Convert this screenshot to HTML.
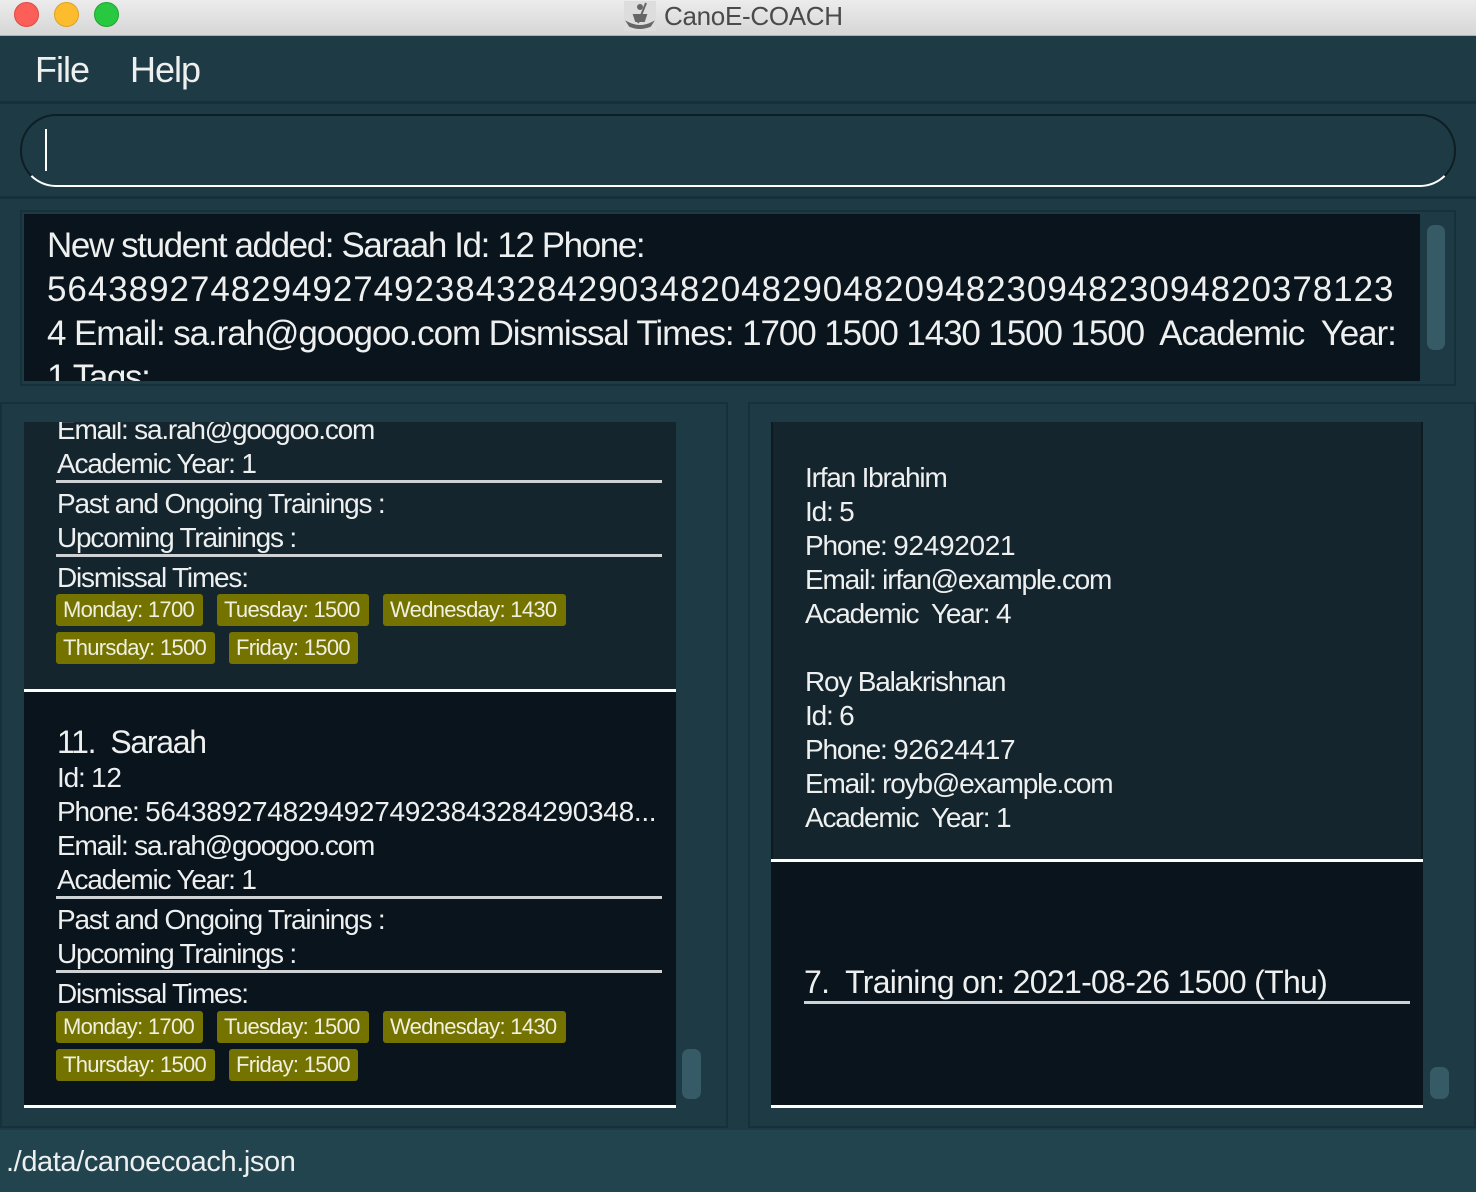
<!DOCTYPE html>
<html><head><meta charset="utf-8"><style>
*{margin:0;padding:0;box-sizing:border-box}
body{width:1476px;height:1192px;overflow:hidden;background:#1d3a45;font-family:"Liberation Sans",sans-serif;color:#eef0f0;position:relative}
.a{position:absolute}
.t{position:absolute;white-space:nowrap;line-height:1}
.c{font-size:28px;letter-spacing:-1.2px}
.d{letter-spacing:-0.3px}
.tag{position:absolute;height:32px;background:#747300;border-radius:3px;font-size:22px;letter-spacing:-0.7px;line-height:32px;padding-left:7px;white-space:nowrap;color:#f0f0e0}
.ln{position:absolute;height:3px;background:#cfd2d4}
.wl{position:absolute;height:3px;background:#fff}
</style></head><body>
<div class="a" style="left:0;top:0;width:1476px;height:36px;background:linear-gradient(#ececec,#d6d6d6);border-bottom:1px solid #b0b0b0"></div>
<div class="a" style="left:14px;top:2px;width:25px;height:25px;border-radius:50%;background:#fc5f57;border:1px solid #de4a42"></div>
<div class="a" style="left:54px;top:2px;width:25px;height:25px;border-radius:50%;background:#fdbc2e;border:1px solid #dea123"></div>
<div class="a" style="left:94px;top:2px;width:25px;height:25px;border-radius:50%;background:#28c840;border:1px solid #1ea532"></div>
<svg class="a" style="left:624px;top:1px" width="32" height="30" viewBox="0 0 32 30"><rect width="32" height="30" fill="#ddd"/><circle cx="16" cy="6" r="3" fill="#666"/><path d="M10 14 L22 14 L20 20 L12 20 Z M4 22 Q16 28 28 22 L26 25 Q16 29 6 25 Z M22 2 L14 22" stroke="#666" stroke-width="2" fill="#666"/></svg>
<div class="t" style="left:664px;top:3px;font-size:26px;color:#4a4a4a;letter-spacing:-0.3px">CanoE-COACH</div>
<div class="t" style="left:35px;top:52px;font-size:36px;letter-spacing:-1px">File</div>
<div class="t" style="left:130px;top:52px;font-size:36px;letter-spacing:-1px">Help</div>
<div class="a" style="left:0;top:101px;width:1476px;height:3px;background:#17313a"></div>
<div class="a" style="left:20px;top:114px;width:1436px;height:73px;border-radius:36px;border:2px solid #0d1e24;border-bottom-color:#fff"></div>
<div class="a" style="left:45px;top:129px;width:2px;height:42px;background:#fff"></div>
<div class="a" style="left:0;top:196px;width:1476px;height:3px;background:#17313a"></div>
<div class="a" style="left:20px;top:210px;width:1436px;height:176px;border:2px solid #17313a"></div>
<div class="a" style="left:24px;top:214px;width:1396px;height:167px;background:#0a141c;overflow:hidden">
<div class="t" style="left:23px;top:14px;font-size:35px;letter-spacing:-1.4px">New student added: Saraah Id: 12 Phone:</div>
<div class="t" style="left:23px;top:58px;font-size:35px;letter-spacing:0.95px">5643892748294927492384328429034820482904820948230948230948203781​23</div>
<div class="t" style="left:23px;top:102px;font-size:35px;letter-spacing:-1.1px">4 Email: sa.rah@googoo.com Dismissal Times: 1700 1500 1430 1500 1500&nbsp; Academic&nbsp; Year:</div>
<div class="t" style="left:23px;top:146px;font-size:35px;letter-spacing:-1.4px">1 Tags:</div>
</div>
<div class="a" style="left:1427px;top:225px;width:18px;height:125px;border-radius:7px;background:#365a66"></div>
<div class="a" style="left:0;top:402px;width:728px;height:726px;border:2px solid #17313a"></div>
<div class="a" style="left:24px;top:422px;width:652px;height:268px;background:#15252e;overflow:hidden">
<div class="t c" style="left:33px;top:-6px">Email: sa.rah@googoo.com</div>
<div class="t c" style="left:33px;top:28px">Academic Year: <span class="d">1</span></div>
<div class="ln" style="left:32px;top:58px;width:606px"></div>
<div class="t c" style="left:33px;top:68px">Past and Ongoing Trainings :</div>
<div class="t c" style="left:33px;top:102px">Upcoming Trainings :</div>
<div class="ln" style="left:32px;top:132px;width:606px"></div>
<div class="t c" style="left:33px;top:142px">Dismissal Times:</div>
<div class="tag" style="left:32px;top:172px;width:147px">Monday: 1700</div>
<div class="tag" style="left:193px;top:172px;width:152px">Tuesday: 1500</div>
<div class="tag" style="left:359px;top:172px;width:183px">Wednesday: 1430</div>
<div class="tag" style="left:32px;top:210px;width:159px">Thursday: 1500</div>
<div class="tag" style="left:205px;top:210px;width:129px">Friday: 1500</div>
</div>
<div class="wl" style="left:24px;top:689px;width:652px"></div>
<div class="a" style="left:24px;top:692px;width:652px;height:414px;background:#0a141c">
<div class="t" style="left:33px;top:34px;font-size:32px;letter-spacing:-1.3px">11.&nbsp; Saraah</div>
<div class="t c" style="left:33px;top:72px">Id: <span class="d">12</span></div>
<div class="t c" style="left:33px;top:106px">Phone: <span class="d">5643892748294927492384328429034​8...</span></div>
<div class="t c" style="left:33px;top:140px">Email: sa.rah@googoo.com</div>
<div class="t c" style="left:33px;top:174px">Academic Year: <span class="d">1</span></div>
<div class="ln" style="left:32px;top:204px;width:606px"></div>
<div class="t c" style="left:33px;top:214px">Past and Ongoing Trainings :</div>
<div class="t c" style="left:33px;top:248px">Upcoming Trainings :</div>
<div class="ln" style="left:32px;top:278px;width:606px"></div>
<div class="t c" style="left:33px;top:288px">Dismissal Times:</div>
<div class="tag" style="left:32px;top:319px;width:147px">Monday: 1700</div>
<div class="tag" style="left:193px;top:319px;width:152px">Tuesday: 1500</div>
<div class="tag" style="left:359px;top:319px;width:183px">Wednesday: 1430</div>
<div class="tag" style="left:32px;top:357px;width:159px">Thursday: 1500</div>
<div class="tag" style="left:205px;top:357px;width:129px">Friday: 1500</div>
</div>
<div class="wl" style="left:24px;top:1105px;width:652px"></div>
<div class="a" style="left:682px;top:1049px;width:19px;height:50px;border-radius:7px;background:#365a66"></div>
<div class="a" style="left:748px;top:402px;width:728px;height:726px;border:2px solid #17313a"></div>
<div class="a" style="left:771px;top:422px;width:652px;height:438px;background:#15252e;border-left:2px solid #0d1a20;border-right:2px solid #0d1a20">
<div class="t c" style="left:32px;top:42px">Irfan Ibrahim</div>
<div class="t c" style="left:32px;top:76px">Id: <span class="d">5</span></div>
<div class="t c" style="left:32px;top:110px">Phone: <span class="d">92492021</span></div>
<div class="t c" style="left:32px;top:144px">Email: irfan@example.com</div>
<div class="t c" style="left:32px;top:178px">Academic&nbsp; Year: <span class="d">4</span></div>
<div class="t c" style="left:32px;top:246px">Roy Balakrishnan</div>
<div class="t c" style="left:32px;top:280px">Id: <span class="d">6</span></div>
<div class="t c" style="left:32px;top:314px">Phone: <span class="d">92624417</span></div>
<div class="t c" style="left:32px;top:348px">Email: royb@example.com</div>
<div class="t c" style="left:32px;top:382px">Academic&nbsp; Year: <span class="d">1</span></div>
</div>
<div class="wl" style="left:771px;top:859px;width:652px"></div>
<div class="a" style="left:771px;top:862px;width:652px;height:244px;background:#0a141c">
<div class="t" style="left:33px;top:104px;font-size:32px;letter-spacing:-0.7px">7.&nbsp; Training on: 2021-08-26 1500 (Thu)</div>
<div class="ln" style="left:33px;top:139px;width:606px"></div>
</div>
<div class="wl" style="left:771px;top:1105px;width:652px"></div>
<div class="a" style="left:1430px;top:1067px;width:19px;height:32px;border-radius:7px;background:#365a66"></div>
<div class="a" style="left:0;top:1130px;width:1476px;height:62px;background:#22444f"></div>
<div class="t" style="left:6px;top:1148px;font-size:29px;letter-spacing:-0.4px">./data/canoecoach.json</div>
</body></html>
